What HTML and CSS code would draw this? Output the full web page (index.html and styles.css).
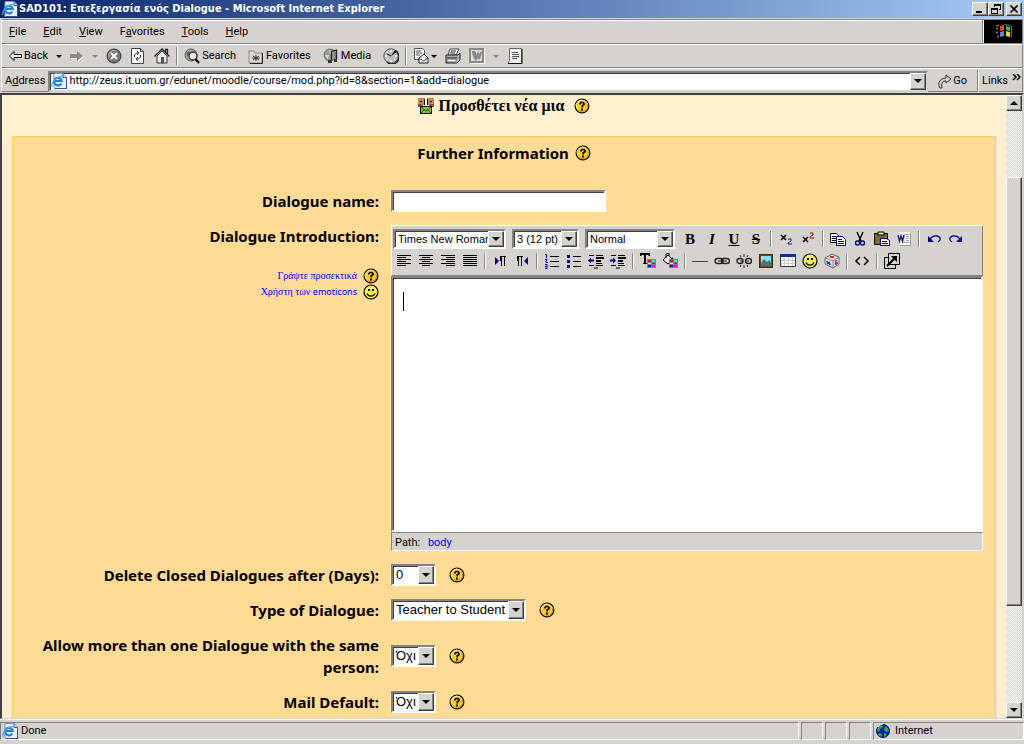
FILE: index.html
```html
<!DOCTYPE html>
<html lang="el">
<head>
<meta charset="utf-8">
<title>SAD101: Επεξεργασία ενός Dialogue</title>
<link rel="stylesheet" href="styles.css">
</head>
<body>
<svg class="defs" aria-hidden="true">
  <symbol id="ie" viewBox="0 0 16 16">
    <path d="M3 .5h9l3.500 3.500v11.500H3z" fill="#eef4ff" stroke="#7a8fd0"/>
    <path d="M12 .5v4h3.500M4 15.500h12M15.500 5v11" fill="none" stroke="#3c4c90"/>
    <path d="M10.300 10.500a3.800 3.800 0 1 1 .4-2.500H4" fill="none" stroke="#1a7fdc" stroke-width="2.200"/>
    <path d="M1.500 13.500C-1 13 3 4 11.500 3.200" fill="none" stroke="#48a8f0" stroke-width="1.200"/>
  </symbol>
  <symbol id="help" viewBox="0 0 16 16">
    <circle cx="8" cy="8" r="6.900" fill="#fc2" stroke="#000" stroke-width="1.200"/>
    <path d="M3 10.500A5.500 5.500 0 0 1 11 3.200" fill="none" stroke="#ffec90"/>
    <path d="M13.300 6A5.600 5.600 0 0 1 5 12.700" fill="none" stroke="#d08a10"/>
    <path d="M6 6.500V5.500L7 4.500h2l1 1v1L8.200 8v1.500" fill="none" stroke="#000" stroke-width="1.700"/>
    <path d="M7 10.500h2v2H7z"/>
  </symbol>
  <symbol id="smile" viewBox="0 0 16 16">
    <circle cx="8" cy="8" r="7" fill="#f4ee50" stroke="#000" stroke-width="1.200"/>
    <path d="M3 10A5.500 5.500 0 0 1 10 3" fill="none" stroke="#ffffb8"/>
    <path d="M5 5h2v2H5zM9 5h2v2H9z"/>
    <path d="M4 9.500c1.500 3.500 6.500 3.500 8 0" fill="none" stroke="#000" stroke-width="1.200"/>
  </symbol>
  <symbol id="palette" viewBox="0 0 9 9">
    <path d="M0 0h9v9H0z" fill="#808080"/>
    <path d="M1 1h3v2H1z" fill="red"/><path d="M5 1h3v2H5z" fill="#0ff"/>
    <path d="M1 4h3v1H1z" fill="#ff0"/><path d="M5 4h3v1H5z" fill="green"/>
    <path d="M1 6h3v2H1z" fill="#00f"/><path d="M5 6h3v2H5z" fill="#f0f"/>
  </symbol>
  <symbol id="globe" viewBox="0 0 16 16">
    <circle cx="8" cy="8" r="6.500" fill="#0818c8" stroke="#001050"/>
    <path d="M2 6l2-3 3-1 1 2-3 2-1 3-2-1zM10 3l3 2 1 3-3 1-2-2zM4 10l3 1-1 3-3-2zM9 10l3 1-1 2-2 1z" fill="#30b030"/>
    <path d="M3 4l2-2 3-1" fill="none" stroke="#c8f0c8"/>
  </symbol>
</svg>

<header class="titlebar">
  <svg class="i16"><use href="#ie"/></svg>
  <h1>SAD101: Επεξεργασία ενός Dialogue - Microsoft Internet Explorer</h1>
  <div class="winbtns">
    <button aria-label="Minimize"><svg width="12" height="10"><path d="M2 7h6v2H2z"/></svg></button>
    <button aria-label="Restore"><svg width="12" height="10"><path d="M4 0h7v6H9V5h1V2H5v1H4zM1 4h7v6H1zM2 6v3h5V6z" fill-rule="evenodd"/></svg></button>
    <button aria-label="Close"><svg width="12" height="10"><path d="M2.500 1.500l7 7m0-7l-7 7" stroke="#000" stroke-width="1.700"/></svg></button>
  </div>
</header>

<nav class="band menubar">
  <button><u>F</u>ile</button><button><u>E</u>dit</button><button><u>V</u>iew</button><button>F<u>a</u>vorites</button><button><u>T</u>ools</button><button><u>H</u>elp</button>
  <svg class="winlogo" viewBox="0 0 38 23" aria-label="Windows">
    <path d="M0 0h38v23H0z"/>
    <path d="M12 6l3-1m-3 4l2-1m-2 5l2-1m-1 5l2-1" stroke="#a05868" stroke-width="1.500"/>
    <path d="M16 6l4-1v5l-4 1z" fill="#e04828"/><path d="M22 6l4 1v4l-4-1z" fill="#50b848"/>
    <path d="M16 12l4-1v5l-4 1z" fill="#5888e0"/><path d="M22 11l4 1v5l-4-1z" fill="#f0d820"/>
    <path d="M20.500 4.500q4 0 7 2v11" fill="none" stroke="#687078"/>
  </svg>
</nav>

<div class="band toolbar" role="toolbar">
  <button><svg width="13" height="12"><path d="M.5 6L5 1.500v3h7.500v3H5v3z" fill="#fff" stroke="#000"/></svg>Back</button>
  <span class="tri"></span>
  <button aria-label="Forward"><svg width="14" height="12"><path d="M14 7L8 2v3H1v4h7v3z" fill="#fff"/><path d="M13 6L7 1v3H0v4h7v3z" fill="#888"/></svg></button>
  <span class="tri dim"></span>
  <button aria-label="Stop"><svg class="i16"><circle cx="8" cy="8" r="7" fill="#777" stroke="#333"/><path d="M3 9A5 5 0 0 1 10 3" fill="none" stroke="#bbb"/><path d="M5 5l6 6m0-6l-6 6" stroke="#fff" stroke-width="1.800"/></svg></button>
  <button aria-label="Refresh"><svg class="i16"><path d="M1.500.5h9l3 3v12h-12z" fill="#fff" stroke="#444"/><path d="M10.500.5v3h3" fill="none" stroke="#444"/><path d="M4.500 9V7l2-2h2M7 3l2 2-2 2M10.500 7v2l-2 2h-2M8 9l-2 2 2 2" fill="none" stroke="#333"/></svg></button>
  <button aria-label="Home"><svg class="i16"><path d="M3 8v7h10V8L8 3z" fill="#eee" stroke="#333"/><path d="M.5 8.500L8 1l7.500 7.500M11.500 4V1.500h2V6" fill="none" stroke="#222" stroke-width="1.300"/><path d="M7 9h3v6H7z" fill="#555"/></svg></button>
  <span class="sep"></span>
  <button class="wide"><svg class="i16"><circle cx="7" cy="7" r="6" fill="#aaa" stroke="#555"/><path d="M2 5l3-2 2 3-3 3z" fill="#666"/><circle cx="9" cy="8" r="4" fill="#e8e8e8" stroke="#333" stroke-width="1.300"/><path d="M11.500 11l3.500 4" stroke="#000" stroke-width="2"/></svg>Search</button>
  <button class="wide"><svg class="i16"><path d="M1 3h5l1 2h7v10H1z" fill="#d8d8d8" stroke="#888"/><path d="M14.500 5v10.500H2" fill="none" stroke="#222"/><path d="M8 7v6M5 8l6 4m0-4l-6 4M4.500 10h7" stroke="#333"/></svg>Favorites</button>
  <button class="wide"><svg class="i16"><circle cx="7" cy="7" r="6" fill="#999" stroke="#666"/><path d="M2 7h4l-1 4zM6 2l4 2-3 2z" fill="#ddd"/><path d="M8.500 13V3.500l5-1.500v10" fill="none" stroke="#222" stroke-width="1.300"/><path d="M5 12h4v3H5zM11 11h3v3h-3z" fill="#333"/></svg>Media</button>
  <button aria-label="History"><svg class="i16"><circle cx="8" cy="8" r="7.200" fill="#bbb" stroke="#555"/><path d="M14 4A7 7 0 0 1 4 14" fill="none" stroke="#222" stroke-width="1.500"/><path d="M8 2v2M8 12v2M2 8h2M12 8h2M4 4l1 1M4 12l1-1M12 12l-1-1" stroke="#fff" stroke-width="1.500"/><path d="M8 8l4-6 3 1z"/><path d="M8 8L4 6" stroke="#111"/></svg></button>
  <span class="sep"></span>
  <button aria-label="Mail"><svg class="i16"><path d="M1.500.5h8l2 2v9h-10z" fill="#fff" stroke="#555"/><path d="M3 3h5M3 5h6M3 7h4" stroke="#555"/><path d="M6 10l5-4 4 4v5H6z" fill="#eee" stroke="#222"/><path d="M6 10l4.500 3L15 10" fill="none" stroke="#444"/></svg><span class="tri"></span></button>
  <button aria-label="Print"><svg class="i16"><path d="M5 1h9l-3 6H3z" fill="#fff" stroke="#444"/><path d="M1 7h12l2-2v7l-3 3H1z" fill="#aaa" stroke="#222"/><path d="M6 3h5M5 5h5M2 10h10" stroke="#222"/><path d="M3 12h7v1H3z" fill="#fff"/></svg></button>
  <button aria-label="Edit with Word"><svg class="i16"><path d="M1 1h15v15H1z" fill="#fff"/><path d="M1 1h13v13H1z" fill="#ddd" stroke="#888" stroke-width="2"/><path d="M3 4h3m0 0l1 7 2-5 1 5 2-7M4 4l2 7" fill="none" stroke="#888" stroke-width="2"/></svg></button>
  <span class="tri dim"></span>
  <button aria-label="Discuss"><svg class="i16"><path d="M2.500.5h12v15H1l1.500-3z" fill="#f0f0f0" stroke="#666"/><path d="M15 1v14.500H1" fill="none" stroke="#111"/><path d="M5 4.500h6M5 6.500h7M5 8.500h7M5 10.500h5" stroke="#555"/></svg></button>
</div>

<form class="band address">
  <label for="url">A<u>d</u>dress</label>
  <div class="urlbox">
    <svg class="i16"><use href="#ie"/></svg>
    <input id="url" value="http://zeus.it.uom.gr/edunet/moodle/course/mod.php?id=8&amp;section=1&amp;add=dialogue">
    <button type="button" class="arrow" aria-label="Show addresses"></button>
  </div>
  <button type="button" class="go"><svg width="14" height="15"><path d="M2 14C-1 9 2 4 8 4V1l5 4-5 4V7C5 7 3 9 4 14z" fill="#ccc" stroke="#333"/></svg>Go</button>
  <div class="links">Links <svg width="9" height="7"><path d="M1 0l3 3-3 3M5 0l3 3-3 3" fill="none" stroke="#000" stroke-width="1.500"/></svg></div>
</form>

<div class="viewport">
  <main class="page">
    <h2 class="heading greek">
      <svg class="i16"><path d="M0 0h7v7H0zM9 0h7v7H9z" fill="#c48850"/><path d="M2 3h2v1H2zM12 3h2v1h-2zM6 1h1v6H6zM9 1h1v6H9zM1 6h3v1H1z"/><path d="M7 1h2v5H7z" fill="#fff"/><path d="M0 6h4l1 2h6l1-2h4v3H0z" fill="#805030"/><path d="M2.500 8.500h11v7h-11z" fill="#80cc20" stroke="#000"/><path d="M3 9l5 4 5-4M3 15l4-4m6 4l-4-4" fill="none" stroke="#205000"/></svg>
      Προσθέτει νέα μια
      <button class="helpbtn" aria-label="Help"><svg class="i16"><use href="#help"/></svg></button>
    </h2>
    <section class="panel">
      <h2 class="heading">Further Information <button class="helpbtn" aria-label="Help"><svg class="i16"><use href="#help"/></svg></button></h2>
      <form class="fields">
        <label for="name">Dialogue name:</label>
        <input class="text" id="name">

        <div class="side">
          <label for="intro">Dialogue Introduction:</label>
          <ul class="hints">
            <li><a href="#">Γράψτε προσεκτικά</a><svg class="i16"><use href="#help"/></svg></li>
            <li><a href="#">Χρήστη των <span>emoticons</span></a><svg class="i16"><use href="#smile"/></svg></li>
          </ul>
        </div>
        <div class="editor">
          <div class="tools">
            <div class="row">
              <div class="combo small font"><select aria-label="Font"><option>Times New Roman</option></select><span class="arrow"></span></div>
              <div class="combo small size"><select aria-label="Size"><option>3 (12 pt)</option></select><span class="arrow"></span></div>
              <div class="combo small style"><select aria-label="Style"><option>Normal</option></select><span class="arrow"></span></div>
              <button type="button" class="t"><b>B</b></button><button type="button" class="t"><b><i>I</i></b></button><button type="button" class="t"><b><u>U</u></b></button><button type="button" class="t"><b><s>S</s></b></button>
              <span class="slot"></span>
              <button type="button" aria-label="Subscript"><svg class="i16"><path d="M3 4l5 5m0-5L3 9" stroke="#000" stroke-width="1.600"/><path d="M10 8h3v2l-3 2v1h4" fill="none" stroke="#118"/></svg></button>
              <button type="button" aria-label="Superscript"><svg class="i16"><path d="M3 6l5 5m0-5l-5 5" stroke="#000" stroke-width="1.600"/><path d="M10 2h3v2l-3 2v1h4" fill="none" stroke="#a11"/></svg></button>
              <span class="slot"></span>
              <button type="button" aria-label="Copy"><svg class="i16"><path d="M.5 2.500h6l2 2v7h-8z" fill="#fff" stroke="#000"/><path d="M2 5.500h4M2 7.500h4M2 9.500h4" stroke="#000"/><path d="M6.500 5.500h6l3 3v6h-9z" fill="#fff" stroke="#008"/><path d="M8 8.500h4M8 10.500h6M8 12.500h6" stroke="#008"/></svg></button>
              <button type="button" aria-label="Cut"><svg class="i16"><path d="M5 1l4 9M11 1L7 10" stroke="#000" stroke-width="1.400"/><circle cx="5.500" cy="12" r="2" fill="none" stroke="#008" stroke-width="1.300"/><circle cx="10.500" cy="12" r="2" fill="none" stroke="#008" stroke-width="1.300"/></svg></button>
              <button type="button" aria-label="Paste"><svg class="i16"><path d="M.5 2.500h13v11H.5z" fill="#776b30" stroke="#000"/><path d="M4 1h6v3H4z" fill="#ee6" stroke="#000"/><path d="M6.500 7.500h6l3 2v5h-9z" fill="#fff" stroke="#008"/><path d="M8 10.500h5M8 12.500h6" stroke="#008"/></svg></button>
              <button type="button" aria-label="Clean Word HTML"><svg class="i16"><path d="M4 1h10v13H4z" fill="#fff"/><path d="M6 3.500h7M10 5.500h3M10 7.500h3M10 9.500h3M6 11.500h7M4 14.500h10.500V2" fill="none" stroke="#999"/><path d="M1 3h8v8H1z" fill="#dde"/><path d="M2 4l1.500 6L5 5l1.500 5L8 4" fill="none" stroke="#227" stroke-width="1.400"/></svg></button>
              <span class="slot"></span>
              <button type="button" aria-label="Undo"><svg class="i16"><path d="M4 8q3-4 7-3t3 4l-2 2" fill="none" stroke="#009" stroke-width="1.300"/><path d="M2 5v6h6z" fill="#009"/></svg></button>
              <button type="button" aria-label="Redo"><svg class="i16"><path d="M12 8q-3-4-7-3t-3 4l2 2" fill="none" stroke="#009" stroke-width="1.300"/><path d="M14 5v6H8z" fill="#009"/></svg></button>
            </div>
            <div class="row">
              <button type="button" aria-label="Align left"><svg class="i16"><path d="M1 2.500h14M1 4.500h9M1 6.500h14M1 8.500h9M1 10.500h14M1 12.500h9" stroke="#000"/></svg></button>
              <button type="button" aria-label="Center"><svg class="i16"><path d="M1 2.500h14M4 4.500h8M1 6.500h14M4 8.500h8M1 10.500h14M4 12.500h8" stroke="#000"/></svg></button>
              <button type="button" aria-label="Align right"><svg class="i16"><path d="M1 2.500h14M6 4.500h9M1 6.500h14M6 8.500h9M1 10.500h14M6 12.500h9" stroke="#000"/></svg></button>
              <button type="button" aria-label="Justify"><svg class="i16"><path d="M1 2.500h14M1 4.500h14M1 6.500h14M1 8.500h14M1 10.500h14M1 12.500h14" stroke="#000"/></svg></button>
              <span class="slot"></span>
              <button type="button" aria-label="Left to right"><svg class="i16"><path d="M3 4v8l4-4z" fill="#009"/><path d="M9.500 4v9M12.500 4v9M8 3.500h6" stroke="#000"/><path d="M8 4h2v4H8z"/></svg></button>
              <button type="button" aria-label="Right to left"><svg class="i16"><path d="M14 4v8l-4-4z" fill="#009"/><path d="M4.500 4v9M7.500 4v9M3 3.500h6" stroke="#000"/><path d="M3 4h2v4H3z"/></svg></button>
              <span class="slot"></span>
              <button type="button" aria-label="Numbered list"><svg class="i16"><path d="M6 3.500h9M6 8.500h9M6 13.500h9" stroke="#000"/><path d="M1 1.500h1.500V5M1 6.500h2l-1 2v1h2M1 11.500h2v4H1M1 13.500h2" fill="none" stroke="#009"/></svg></button>
              <button type="button" aria-label="Bulleted list"><svg class="i16"><path d="M7 3.500h8M7 8.500h8M7 13.500h8" stroke="#000"/><path d="M1 2h3v3H1zM1 7h3v3H1zM1 12h3v3H1z" fill="#009"/></svg></button>
              <button type="button" aria-label="Outdent"><svg class="i16"><path d="M1 2.500h5M8 2.500h7M8 10.500h6M1 12.500h5M8 12.500h7M6 15h4" stroke="#000"/><path d="M8 5h8M8 8h5" stroke="#000" stroke-width="2"/><path d="M0 7.500l3-3v2h3v2H3v2z" fill="#009"/></svg></button>
              <button type="button" aria-label="Indent"><svg class="i16"><path d="M1 2.500h5M8 2.500h7M8 10.500h6M1 12.500h5M8 12.500h7M6 15h4" stroke="#000"/><path d="M8 5h8M8 8h5" stroke="#000" stroke-width="2"/><path d="M6 7.500l-3-3v2H0v2h3v2z" fill="#009"/></svg></button>
              <span class="slot"></span>
              <button type="button" aria-label="Font colour"><svg class="i16"><path d="M0 0h10v3H9L8 2H6v8h1v1H3v-1h1V2H2L1 3H0z"/><use href="#palette" x="7" y="6" width="9" height="9"/></svg></button>
              <button type="button" aria-label="Background colour"><svg class="i16"><path d="M1 7l5-5 5 5-5 4z" fill="#eee" stroke="#000"/><path d="M4 5V1l3-1v3" fill="none" stroke="#000"/><path d="M10 4l3 4v3l-3-2z"/><use href="#palette" x="7" y="6" width="9" height="9"/></svg></button>
              <span class="slot"></span>
              <button type="button" aria-label="Horizontal rule"><svg class="i16"><path d="M0 8.500h16" stroke="#444"/></svg></button>
              <button type="button" aria-label="Link"><svg class="i16"><rect x="1" y="5.500" width="8" height="5" rx="2.500" fill="none" stroke="#222" stroke-width="1.400"/><rect x="7.500" y="5.500" width="8" height="5" rx="2.500" fill="none" stroke="#222" stroke-width="1.400"/><path d="M4 8h9" stroke="#222"/></svg></button>
              <button type="button" aria-label="Unlink"><svg class="i16"><rect x="1" y="5.500" width="6" height="5" rx="2.500" fill="none" stroke="#222" stroke-width="1.400"/><rect x="9.500" y="5.500" width="6" height="5" rx="2.500" fill="none" stroke="#222" stroke-width="1.400"/><path d="M4 2l1 2M8 1v3M12 2l-1 2M4 14l1-2M8 15v-3M12 14l-1-2M4 8h2M10 8h3" stroke="#222"/></svg></button>
              <button type="button" aria-label="Image"><svg class="i16"><path d="M2 2h12v12H2z" fill="#7fe4f4" stroke="#742" stroke-width="2"/><path d="M1.500 1.500h13v13h-13z" fill="none" stroke="#220" stroke-dasharray="2 1"/><path d="M3 10l3-4 3 3 2-2 2 3v3H3z" fill="#477"/><path d="M3 4h3v2H3z" fill="#ee2"/></svg></button>
              <button type="button" aria-label="Table"><svg class="i16"><path d="M.5 2.500h15v11H.5z" fill="#fff" stroke="#333"/><path d="M0 1h16v3H0z" fill="#039"/><path d="M4.500 5v8M8.500 5v8M12.500 5v8M1 7.500h14M1 10.500h14" stroke="#ccc"/></svg></button>
              <button type="button" aria-label="Emoticon"><svg class="i16"><use href="#smile"/></svg></button>
              <button type="button" aria-label="Special character"><svg class="i16"><path d="M1 5l7-4 7 3v7l-6 4-8-4z" fill="#ddd" stroke="#667"/><path d="M1 5l8 3v7M9 8l6-4" fill="none" stroke="#889"/><path d="M6 3h4v2H6z" fill="#e22"/><path d="M3 8l1 3m1-2l1 3" stroke="#22d" stroke-width="1.600"/><path d="M12 7v5m-1-2h3" stroke="#828" stroke-width="1.400"/></svg></button>
              <span class="slot"></span>
              <button type="button" aria-label="HTML source"><svg class="i16"><path d="M6 4L2 8l4 4M10 4l4 4-4 4" fill="none" stroke="#000" stroke-width="1.500"/></svg></button>
              <span class="slot"></span>
              <button type="button" aria-label="Enlarge editor"><svg class="i16"><path d="M4.500.5h11v11h-11z" fill="none" stroke="#000"/><path d="M4 4.500H.5v11h11V12" fill="none" stroke="#000"/><path d="M3 13l9-9" stroke="#000" stroke-width="2"/><path d="M7 3h6v6z"/></svg></button>
            </div>
          </div>
          <div class="writing"><textarea id="intro"></textarea><span class="caret"></span></div>
          <div class="path">Path: <a href="#">body</a></div>
        </div>

        <label for="days">Delete Closed Dialogues after (Days):</label>
        <div class="field"><div class="combo days"><select id="days"><option>0</option></select><span class="arrow"></span></div><button type="button" class="helpbtn" aria-label="Help"><svg class="i16"><use href="#help"/></svg></button></div>

        <label for="type">Type of Dialogue:</label>
        <div class="field"><div class="combo type"><select id="type"><option>Teacher to Student</option></select><span class="arrow"></span></div><button type="button" class="helpbtn" aria-label="Help"><svg class="i16"><use href="#help"/></svg></button></div>

        <label for="multi">Allow more than one Dialogue with the same person:</label>
        <div class="field"><div class="combo days"><select id="multi"><option>Όχι</option></select><span class="arrow"></span></div><button type="button" class="helpbtn" aria-label="Help"><svg class="i16"><use href="#help"/></svg></button></div>

        <label for="mail">Mail Default:</label>
        <div class="field"><div class="combo days"><select id="mail"><option>Όχι</option></select><span class="arrow"></span></div><button type="button" class="helpbtn" aria-label="Help"><svg class="i16"><use href="#help"/></svg></button></div>
      </form>
    </section>
  </main>
  <div class="scroll">
    <button class="arrow up" aria-label="Scroll up"></button>
    <span class="before"></span><span class="thumb"></span><span class="after"></span>
    <button class="arrow" aria-label="Scroll down"></button>
  </div>
</div>

<footer class="status">
  <div><svg class="i16"><use href="#ie"/></svg>Done</div><div></div><div></div><div></div>
  <div class="zone"><svg class="i16"><use href="#globe"/></svg>Internet</div>
</footer>
</body>
</html>
```
FILE: styles.css
```css
* { box-sizing: border-box; }
body {
  margin: 0;
  height: 100vh;
  display: flex;
  flex-direction: column;
  overflow: hidden;
  background: #d6d3ce;
  color: #000;
  font: 11px/14px Roboto, sans-serif;
}
button { border: 0; padding: 0; margin: 0; background: none; font: inherit; color: inherit; }
input, select, textarea { margin: 0; border: 0; padding: 0; font: inherit; color: inherit; background: #fff; border-radius: 0; outline: 0; }
svg { display: block; flex: none; }
.defs { width: 0; height: 0; position: absolute; }
.i16 { width: 16px; height: 16px; }

.titlebar {
  display: flex;
  align-items: center;
  height: 18px;
  padding: 0 2px;
  background: linear-gradient(90deg, #08246b, #a5cbf7);
  color: #fff;
}
.titlebar h1 { flex: 1; margin: 0 0 0 1px; font: bold 11px/18px "DejaVu Sans Condensed", sans-serif; white-space: nowrap; }
.winbtns { display: flex; }
.winbtns button, .arrow {
  width: 16px;
  height: 14px;
  background: #d6d3ce;
  border: 1px solid;
  border-color: #fff #404040 #404040 #fff;
  box-shadow: inset -1px -1px #848284;
}
.winbtns button { padding: 1px; }
.winbtns button:last-child { margin-left: 2px; }

.band { display: flex; flex: none; align-items: center; height: 24px; margin: 0 1px; padding-left: 7px; border: solid; border-width: 1px; border-color: #fff #848284 #848284 #fff; }
.menubar { height: 25px; margin-top: 1px; gap: 17px; border-top: 1px solid #848284; box-shadow: inset 0 1px #fff; }
.winlogo { width: 38px; height: 23px; margin-left: auto; box-shadow: -1px 0 #fff, -2px 0 #848284; }

.toolbar { gap: 8px; }
.toolbar button { display: flex; align-items: center; gap: 2px; }
.toolbar .wide { margin-right: 4px; }
.sep { width: 2px; height: 18px; margin: 0 -2px; border-left: 1px solid #848284; border-right: 1px solid #fff; }
.tri { border: solid transparent; border-width: 3px 3px 0; border-top-color: #000; width: 6px; height: 3px; }
.tri.dim { border-top-color: #848284; }

.address { padding-left: 3px; padding-top: 2px; }
.urlbox { display: flex; flex: 1; align-items: center; height: 21px; margin-left: 3px; padding-left: 1px; background: #fff; border: 2px solid; border-color: #848284 #d6d3ce #d6d3ce #848284; box-shadow: inset 1px 1px #404040; }
.urlbox input { flex: 1; margin-left: 2px; background: none; }
.arrow { display: grid; place-items: center; flex: none; height: auto; }
.arrow::after { content: ""; width: 0; height: 0; border: solid transparent; border-width: 4px 4px 0; border-top-color: #000; }
.arrow.up::after { border-width: 0 4px 4px; border-color: transparent transparent #000; }
.urlbox .arrow { align-self: stretch; }
.go { display: flex; align-items: center; gap: 1px; margin: 0 10px; }
.links { display: flex; gap: 4px; padding: 4px 1px 4px 4px; border-left: 1px solid #848284; box-shadow: inset 1px 0 #fff; }

.viewport { display: flex; flex: 1; min-height: 0; margin-top: 1px; border: solid; border-width: 2px 2px 1px; border-color: #404040 #d6d3ce #d6d3ce #404040; }
.page { flex: 1; min-width: 0; padding: 0 10px; overflow: hidden; background: #ffefce; }
.heading { display: flex; align-items: center; justify-content: center; gap: 6px; margin: 0; font: bold 15px/22px "Noto Sans", sans-serif; }
.greek { gap: 5px; font: bold 16px/22px "Liberation Serif", serif; }
.greek .helpbtn { margin-left: 5px; }
.panel { margin-top: 19px; padding: 5px 0 30px; background: #ffdb94; border: 1px solid #ffcb5a; }
.fields { display: grid; grid-template-columns: 366px minmax(0, 1fr); gap: 13px 12px; align-items: center; padding-right: 12px; margin-top: 26px; font: bold 15px/22px "Noto Sans", sans-serif; }
.fields label { text-align: right; }
.text, .combo, .editor textarea { border: 2px solid; border-color: #848284 #fff #fff #848284; box-shadow: inset 1px 1px #404040; }
.text { width: 215px; height: 22px; padding: 2px; }
.side { align-self: start; display: flex; flex-direction: column; align-items: flex-end; }
.hints { margin: 21px 0 0; padding: 0; list-style: none; font: 10px/16px "Liberation Serif", serif; }
.hints li { display: flex; justify-content: flex-end; gap: 6px; }
.hints span { font-family: "Noto Sans", sans-serif; font-size: 9px; }
a { color: #00f; text-decoration: none; }
.field { display: flex; align-items: center; gap: 13px; }
.helpbtn { display: block; }

.combo { display: grid; height: 22px; background: #fff; font: 13px/16px "Liberation Sans", sans-serif; }
.combo select, .combo .arrow { grid-area: 1 / 1; }
.combo select { width: 100%; padding-left: 3px; appearance: none; background: none; }
.combo .arrow { justify-self: end; pointer-events: none; }
.days { width: 45px; }
.type { width: 135px; }
.small { height: 20px; font: 11px/14px "Liberation Sans", sans-serif; }
.font { width: 113px; }
.size { width: 67px; }
.style { width: 90px; }
.small + .small { margin-left: 6px; }
.small + .t { margin-left: 4px; }

.editor { display: flex; flex-direction: column; font: 11px/14px Roboto, sans-serif; }
.tools { padding: 2px 0 3px 1px; background: #d6d3ce; border: 1px solid; border-color: #fff #848284 #848284 #fff; }
.row { display: flex; align-items: center; height: 22px; }
.row button { flex: none; display: grid; place-items: center; width: 22px; height: 22px; }
.row .t { font: 15px/20px "Liberation Serif", serif; }
.slot { width: 8px; height: 16px; background: linear-gradient(90deg, transparent 3px, #848284 3px 4px, #fff 4px 5px, transparent 5px); }
.writing { position: relative; }
.editor textarea { display: block; width: 100%; height: 256px; padding: 14px 10px; resize: none; font: 16px/20px "Liberation Serif", serif; }
.caret { position: absolute; left: 12px; top: 16px; width: 1px; height: 19px; background: #000; }
.path { padding: 3px 3px 0; height: 19px; background: #d6d3ce; border: 1px solid; border-color: #848284 #fff #fff #848284; }
.path a { margin-left: 5px; }

.scroll { display: flex; flex-direction: column; width: 16px; background: repeating-conic-gradient(#fff 0 25%, #d6d3ce 0 50%) 0 0 / 2px 2px; }
.scroll .arrow { width: 16px; height: 16px; }
.before { flex: 66; }
.thumb { flex: 429; background: #d6d3ce; border: 1px solid; border-color: #fff #404040 #404040 #fff; box-shadow: inset -1px -1px #848284; }
.after { flex: 96; }

.status { display: grid; grid-template-columns: 1fr 22px 22px 22px 151px; gap: 2px; padding: 2px 0 4px; border-top: 1px solid #fff; }
.status div { display: flex; align-items: center; gap: 3px; height: 18px; padding-left: 1px; border: 1px solid; border-color: #848284 #fff #fff #848284; }
.status .zone { gap: 4px; }
```
